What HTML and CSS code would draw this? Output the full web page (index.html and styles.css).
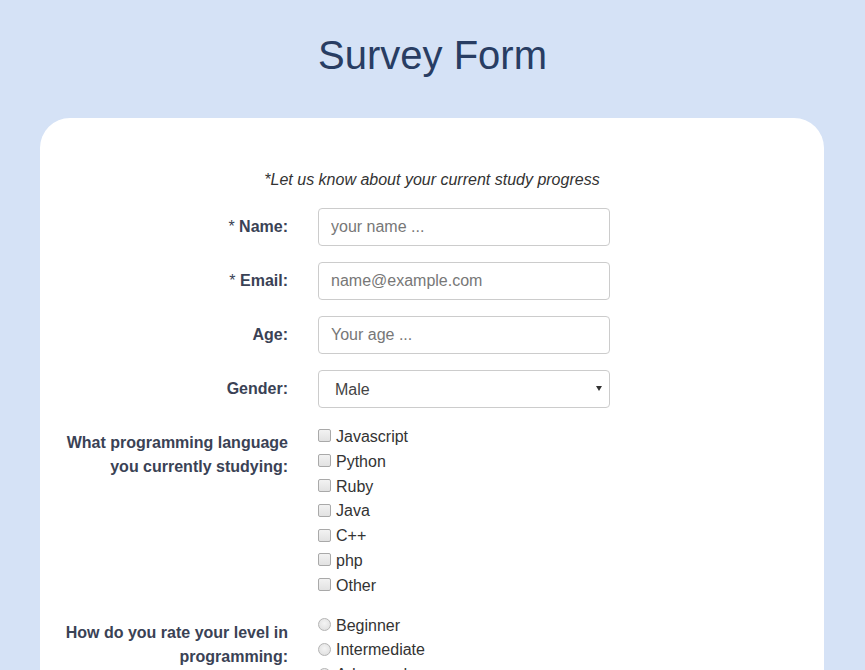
FILE: index.html
```html
<!DOCTYPE html>
<html lang="en">
<head>
<meta charset="utf-8">
<title>Survey Form</title>
<link rel="stylesheet" href="styles.css">
</head>
<body>
<h1 class="title">Survey Form</h1>
<main class="card">
  <p class="intro">*Let us know about your current study progress</p>
  <form class="form">
    <div class="row">
      <label class="label" for="name"><span class="req">*</span> Name:</label>
      <input class="field" id="name" type="text" placeholder="your name ...">
    </div>
    <div class="row">
      <label class="label" for="email"><span class="req">*</span> Email:</label>
      <input class="field" id="email" type="email" placeholder="name@example.com">
    </div>
    <div class="row">
      <label class="label" for="age">Age:</label>
      <input class="field" id="age" type="text" placeholder="Your age ...">
    </div>
    <div class="row">
      <label class="label" for="gender">Gender:</label>
      <div class="select-wrap">
        <select class="field select" id="gender">
          <option>Male</option>
          <option>Female</option>
        </select>
      </div>
    </div>
    <div class="row">
      <div class="label">What programming language you currently studying:</div>
      <div class="options options-check">
        <label class="option"><input class="check" type="checkbox">Javascript</label>
        <label class="option"><input class="check" type="checkbox">Python</label>
        <label class="option"><input class="check" type="checkbox">Ruby</label>
        <label class="option"><input class="check" type="checkbox">Java</label>
        <label class="option"><input class="check" type="checkbox">C++</label>
        <label class="option"><input class="check" type="checkbox">php</label>
        <label class="option"><input class="check" type="checkbox">Other</label>
      </div>
    </div>
    <div class="row">
      <div class="label">How do you rate your level in programming:</div>
      <div class="options">
        <label class="option"><input class="radio" type="radio" name="level">Beginner</label>
        <label class="option"><input class="radio" type="radio" name="level">Intermediate</label>
        <label class="option"><input class="radio" type="radio" name="level">Advanced</label>
      </div>
    </div>
  </form>
</main>
</body>
</html>
```
FILE: styles.css
```css
html, body {
  margin: 0;
  padding: 0;
}
body {
  background: #d5e2f6;
  font-family: "Liberation Sans", Arial, sans-serif;
  color: #333;
}
.title {
  margin: 0;
  padding-top: 32px;
  text-align: center;
  font-size: 40px;
  font-weight: normal;
  line-height: 46px;
  color: #283d63;
}
.card {
  margin: 40px 41px 40px 40px;
  background: #fff;
  border-radius: 30px;
  padding: 50px 0 40px;
}
.intro {
  margin: 0 0 16px;
  text-align: center;
  font-style: italic;
  font-size: 16px;
  line-height: 24px;
  color: #333;
}
.form {
  display: flex;
  flex-direction: column;
  gap: 16px;
}
.row {
  display: flex;
  align-items: flex-start;
  gap: 30px;
}
.label {
  flex: 0 0 248px;
  text-align: right;
  font-weight: bold;
  font-size: 16px;
  line-height: 24px;
  padding-top: 7px;
  color: #3a4255;
}
.req {
  font-weight: normal;
}
.field {
  box-sizing: border-box;
  width: 292px;
  height: 38px;
  border: 1px solid #ccc;
  border-radius: 4px;
  padding: 0 12px;
  font-family: "Liberation Sans", Arial, sans-serif;
  font-size: 16px;
  color: #444;
  background: #fff;
  outline: none;
}
.field::placeholder {
  color: #777;
}
.select-wrap {
  position: relative;
  width: 292px;
}
.select {
  appearance: none;
  -webkit-appearance: none;
  padding-left: 16px;
  color: #444;
}
.select-wrap::after {
  content: "";
  position: absolute;
  right: 8px;
  top: 16px;
  border-left: 3px solid transparent;
  border-right: 3px solid transparent;
  border-top: 5px solid #333;
}
.options {
  display: flex;
  flex-direction: column;
}
.options-check {
  padding-top: 1px;
  margin-bottom: -1px;
}
.option {
  display: flex;
  align-items: center;
  font-size: 16px;
  line-height: 24.8px;
  color: #333;
}
.check,
.radio {
  appearance: none;
  -webkit-appearance: none;
  box-sizing: border-box;
  width: 13px;
  height: 13px;
  margin: 0 5px 3px 0;
  border: 1px solid #a9a9a9;
  background: linear-gradient(#f2f2f2, #e2e2e2);
}
.check {
  border-radius: 2px;
}
.radio {
  border-radius: 50%;
  border-color: #b4b4b4;
  background: radial-gradient(circle at 50% 40%, #f4f4f4, #dcdcdc);
}
```
